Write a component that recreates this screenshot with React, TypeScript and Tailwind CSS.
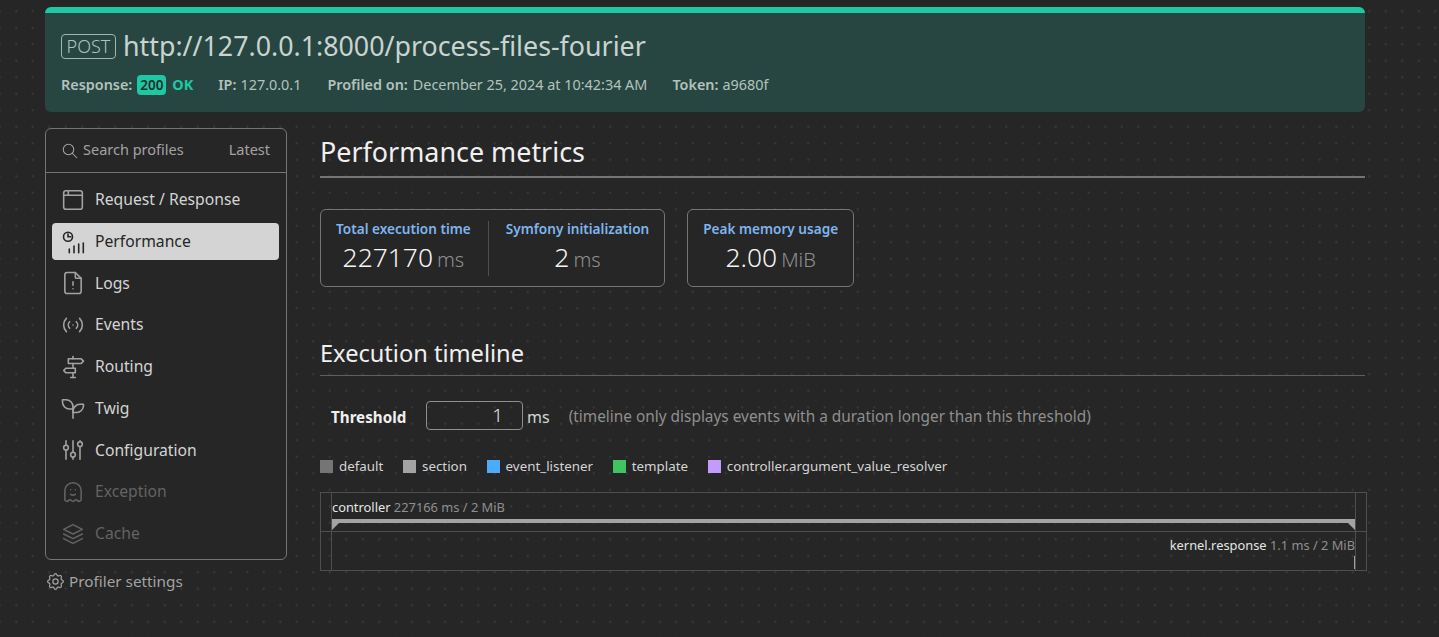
import type { ReactNode } from "react";
import {
  TbAccessPoint,
  TbAdjustments,
  TbBrowser,
  TbDirections,
  TbFileAlert,
  TbGhost,
  TbSearch,
  TbSeeding,
  TbSettings,
  TbStack2,
} from "react-icons/tb";

// Performance icon: small clock over a bar chart
function PerfIcon() {
  return (
    <svg width="28" height="28" viewBox="0 0 28 28" fill="none" stroke="currentColor" strokeWidth="1.6" strokeLinecap="round">
      <circle cx="9" cy="8.7" r="4.5" />
      <path d="M9 6v2.7h2.7" />
      <path d="M10.3 24.7v-3.7M15 24.7v-6.7M19.7 24.7v-8.7M24.3 24.7v-9.7" />
    </svg>
  );
}

type NavItem = { label: string; icon: ReactNode; active?: boolean; disabled?: boolean };

const navItems: NavItem[] = [
  { label: "Request / Response", icon: <TbBrowser size={28} strokeWidth={1.35} /> },
  { label: "Performance", icon: <PerfIcon />, active: true },
  { label: "Logs", icon: <TbFileAlert size={28} strokeWidth={1.35} /> },
  { label: "Events", icon: <TbAccessPoint size={28} strokeWidth={1.35} /> },
  { label: "Routing", icon: <TbDirections size={28} strokeWidth={1.35} /> },
  { label: "Twig", icon: <TbSeeding size={28} strokeWidth={1.35} /> },
  { label: "Configuration", icon: <TbAdjustments size={28} strokeWidth={1.35} /> },
  { label: "Exception", icon: <TbGhost size={28} strokeWidth={1.35} />, disabled: true },
  { label: "Cache", icon: <TbStack2 size={28} strokeWidth={1.35} />, disabled: true },
];

const legend = [
  { label: "default", color: "bg-[#757575]" },
  { label: "section", color: "bg-[#a3a3a3]" },
  { label: "event_listener", color: "bg-[#4dabff]" },
  { label: "template", color: "bg-[#40c463]" },
  { label: "controller.argument_value_resolver", color: "bg-[#c39bff]" },
];

function Metric({ label, value, unit }: { label: string; value: string; unit: string }) {
  return (
    <div className="flex flex-col items-center">
      <div className="text-[13.6px] leading-[18px] font-semibold whitespace-nowrap text-[#7fb5ee]">{label}</div>
      <div className="mt-[1px] flex items-baseline leading-[36px]">
        <span className="text-[26.4px] font-light text-[#f5f5f5]">{value}</span>
        <span className="ml-[4px] text-[20px] font-light text-[#8f8f8f]">{unit}</span>
      </div>
    </div>
  );
}

function Sidebar() {
  return (
    <div className="w-[242px] shrink-0">
      <div className="h-[432px] rounded-[6px] border border-[#757575] bg-[#262626]">
        <div className="flex h-[44px] items-center border-b border-[#757575] pr-[16px] pl-[15px] text-[14.5px] text-[#a3a3a3]">
          <TbSearch size={18} strokeWidth={1.4} />
          <span className="relative -top-[1px] ml-[4px]">Search profiles</span>
          <span className="relative -top-[1px] ml-auto">Latest</span>
        </div>
        <ul className="pt-[8.3px] pr-[7px] pl-[6px]">
          {navItems.map((item) => (
            <li
              key={item.label}
              className={`mb-[4.75px] flex h-[37px] items-center rounded-[4px] pl-[7px] text-[15.7px] ${
                item.active
                  ? "bg-[#d4d4d4] text-[#262626]"
                  : item.disabled
                    ? "text-[#636363]"
                    : "text-[#d4d4d4]"
              }`}
            >
              <span className={`flex w-[28px] shrink-0 justify-center ${item.active ? "text-[#262626]" : item.disabled ? "text-[#636363]" : "text-[#a3a3a3]"}`}>
                {item.icon}
              </span>
              <span className="ml-[8px]">{item.label}</span>
            </li>
          ))}
        </ul>
      </div>
      <div className="mt-[9px] flex items-center text-[15.3px] leading-[24px] text-[#a3a3a3]">
        <TbSettings size={21} strokeWidth={1.4} />
        <span className="ml-[3px]">Profiler settings</span>
      </div>
    </div>
  );
}

function Timeline() {
  return (
    <div className="relative mt-[17px] h-[79px] w-[1047px] border border-[#4f4f4f] text-[12.85px] leading-[18px]">
      {/* vertical guides */}
      <div className="absolute top-0 bottom-0 left-[10px] w-px bg-[#4f4f4f]" />
      <div className="absolute top-0 right-[10px] bottom-0 w-px bg-[#4f4f4f]" />

      <div className="relative h-[39px] border-b border-[#4f4f4f]">
        <div className="pt-[4.5px] pl-[11px] whitespace-nowrap text-[#e5e5e5]">
          controller <span className="text-[#8f8f8f]">227166 ms / 2 MiB</span>
        </div>
        <div className="absolute top-[26px] right-[11px] left-[11px] h-[4px] bg-[#a3a3a3]" />
        <div className="absolute top-[30px] left-[11px] h-0 w-0 border-t-[7px] border-r-[7px] border-t-[#a3a3a3] border-r-transparent" />
        <div className="absolute top-[30px] right-[11px] h-0 w-0 border-t-[7px] border-l-[7px] border-t-[#a3a3a3] border-l-transparent" />
      </div>
      <div className="relative">
        <div className="pt-[4px] pr-[11px] text-right whitespace-nowrap text-[#e5e5e5]">
          kernel.response <span className="text-[#8f8f8f]">1.1 ms / 2 MiB</span>
        </div>
        <div className="absolute top-[24px] right-[11px] h-[13px] w-px bg-[#a3a3a3]" />
      </div>
    </div>
  );
}

export default function App() {
  return (
    <div
      className="h-[637px] overflow-hidden bg-[#262626] bg-[radial-gradient(#373737_1px,transparent_1px)] bg-[size:16.5px_16.5px] bg-[position:8px_3px] px-[45px] pt-[7px] text-[#d4d4d4]"
      style={{ fontFamily: '"Noto Sans", sans-serif' }}
    >
      {/* Request header */}
      <div className="h-[105px] w-[1320px] rounded-[6px] border-t-[6px] border-[#1dc9a4] bg-[#274641] px-[16px]">
        <div className="flex items-center pt-[14px] leading-[38px]">
          <span className="flex h-[25px] w-[55px] items-center justify-center rounded-[4px] border border-[#a3b5b0] text-[18px] font-light text-[#b3c2bd]">
            POST
          </span>
          <span className="ml-[7px] text-[26.8px] text-[#c9d3d0]">http://127.0.0.1:8000/process-files-fourier</span>
        </div>
        <div className="mt-[10px] flex items-center text-[14.4px] leading-[20px] text-[#b3c2bd]">
          <b className="font-semibold">Response:</b>
          <span className="ml-[5px] flex h-[20px] w-[29px] items-center justify-center rounded-[4px] bg-[#1dc9a4] text-[13.5px] font-semibold text-[#1e2b28]">200</span>
          <b className="ml-[6px] font-bold text-[#1dc9a4]">OK</b>
          <b className="ml-[25px] font-semibold">IP:</b>
          <span className="ml-[4px]">127.0.0.1</span>
          <b className="ml-[26px] font-semibold">Profiled on:</b>
          <span className="ml-[5px]">December 25, 2024 at 10:42:34 AM</span>
          <b className="ml-[25px] font-semibold">Token:</b>
          <span className="ml-[4px]">a9680f</span>
        </div>
      </div>

      <div className="mt-[16px] flex">
        <Sidebar />

        <div className="ml-[33px] w-[1045px]">
          <h2 className="border-b-2 border-[#757575] pt-[3px] pb-[3px] text-[26.9px] leading-[42px] text-[#f0f0f0]">Performance metrics</h2>

          <div className="mt-[31px] flex gap-[22px]">
            <div className="flex h-[78px] items-start rounded-[6px] border border-[#757575] bg-[#262626] px-[15px] pt-[10px]">
              <Metric label="Total execution time" value="227170" unit="ms" />
              <div className="mx-[17px] mt-[1px] h-[55px] w-px bg-[#4f4f4f]" />
              <Metric label="Symfony initialization" value="2" unit="ms" />
            </div>
            <div className="flex h-[78px] items-start rounded-[6px] border border-[#757575] bg-[#262626] px-[15px] pt-[10px]">
              <Metric label="Peak memory usage" value="2.00" unit="MiB" />
            </div>
          </div>

          <h3 className="mt-[50px] border-b border-[#5f5f5f] pb-[5px] text-[23.6px] leading-[33px] text-[#f0f0f0]">Execution timeline</h3>

          <div className="mt-[10px] ml-[11px] flex h-[58px] items-center">
            <b className="relative top-[2px] w-[76px] text-[15.2px] font-bold whitespace-nowrap text-[#f0f0f0]">Threshold</b>
            <span className="ml-[19px] flex h-[29px] w-[97px] items-center justify-end rounded-[4px] border border-[#8f8f8f] pr-[19px] text-[19px] font-light text-[#e5e5e5]">1</span>
            <span className="relative top-[2px] ml-[4px] text-[16px] text-[#d4d4d4]">ms</span>
            <span className="relative top-[2px] ml-[19px] text-[15.4px] text-[#8f8f8f]">(timeline only displays events with a duration longer than this threshold)</span>
          </div>

          <div className="mt-[13px] flex items-center gap-[19.7px] text-[13.35px] leading-[18px] text-[#d4d4d4]">
            {legend.map((l) => (
              <div key={l.label} className="flex items-center gap-[6px]">
                <span className={`h-[13px] w-[13px] ${l.color}`} />
                {l.label}
              </div>
            ))}
          </div>

          <Timeline />
        </div>
      </div>
    </div>
  );
}
